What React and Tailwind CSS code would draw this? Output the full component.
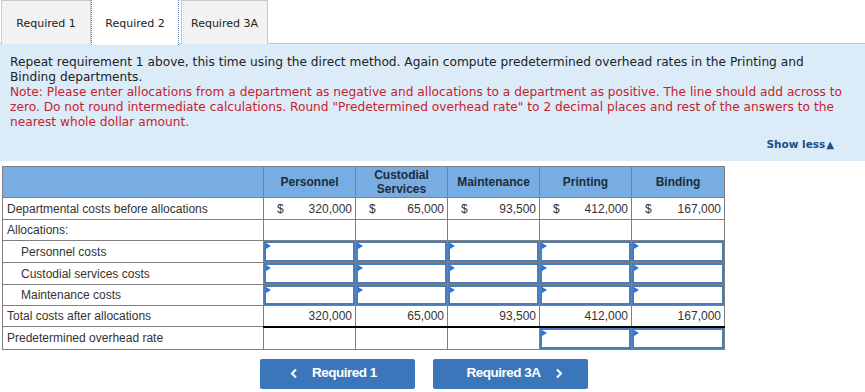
import React from "react";

const VERDANA = { fontFamily: '"DejaVu Sans", Verdana, sans-serif' };
const ARIAL = { fontFamily: '"Liberation Sans", Arial, sans-serif' };

function Marker() {
  return (
    <span className="absolute left-0 top-0 h-0 w-0 border-y-[3px] border-l-[5px] border-y-transparent border-l-[#2f73d0]" />
  );
}

function InputCell({ h = "h-[21px]" }) {
  return (
    <td className="border border-[#7f7f7f] p-0 align-top">
      <div className={`relative w-full border-2 border-[#4a7cbc] ${h}`}>
        <Marker />
      </div>
    </td>
  );
}

function PlainCell({ children, className = "" }) {
  return <td className={`border border-[#7f7f7f] px-[3px] text-right ${className}`}>{children}</td>;
}

function DollarCell({ value }) {
  return (
    <td className="border border-[#7f7f7f] pl-[13px] pr-[3px]">
      <div className="flex justify-between">
        <span>$</span>
        <span>{value}</span>
      </div>
    </td>
  );
}

const cols = ["Personnel", "Custodial Services", "Maintenance", "Printing", "Binding"];
const before = ["320,000", "65,000", "93,500", "412,000", "167,000"];

export default function App() {
  return (
    <div className="h-[392px] w-[865px] overflow-hidden bg-white">
      {/* tab strip */}
      <div className="flex h-[44px] border-b border-[#c8c8c8] pl-[1px]" style={VERDANA}>
        <div className="flex h-[44px] w-[90px] items-center justify-center border border-b-0 border-[#c8c8c8] bg-[#f2f2f2] pt-[3px] text-[11px] text-[#222]">
          Required 1
        </div>
        <div className="relative -mb-px flex h-[45px] w-[88px] items-center justify-center border-x border-dotted border-x-[#5b7fae] bg-white pt-[3px] text-[11px] text-[#222]">
          Required 2
        </div>
        <div className="ml-[2px] flex h-[44px] w-[87px] items-center justify-center border border-b-0 border-[#c8c8c8] bg-[#f2f2f2] pt-[3px] text-[11px] text-[#222]">
          Required 3A
        </div>
      </div>

      {/* instructions panel */}
      <div
        className="flex h-[117px] flex-col bg-[#dcebf8] pl-[10px] pr-[12px] pt-[11px] text-[12.2px] leading-[15px]"
        style={VERDANA}
      >
        <p className="text-[#222]">
          Repeat requirement 1 above, this time using the direct method. Again compute predetermined overhead rates in the Printing and Binding departments.
        </p>
        <p className="text-[#c5232c]">
          Note: Please enter allocations from a department as negative and allocations to a department as positive. The line should add across to zero. Do not round intermediate calculations. Round "Predetermined overhead rate" to 2 decimal places and rest of the answers to the nearest whole dollar amount.
        </p>
        <div className="mt-auto mb-[9px] flex items-center justify-end pr-[19px] text-[10.5px] font-bold text-[#1b4e8a]">
          Show less<span className="ml-[1px] text-[10px] leading-none">▲</span>
        </div>
      </div>

      {/* allocation table */}
      <div className="pl-[2px] pt-[5px]" style={ARIAL}>
        <table className="w-[722px] table-fixed border-collapse text-[12px] text-[#333]">
          <colgroup>
            <col className="w-[261px]" />
            <col className="w-[92px]" />
            <col className="w-[92px]" />
            <col className="w-[92px]" />
            <col className="w-[92px]" />
            <col className="w-[93px]" />
          </colgroup>
          <thead>
            <tr className="h-[31px] bg-[#78ade3]">
              <th className="border border-[#7f7f7f]" />
              {cols.map((c) => (
                <th
                  key={c}
                  className="border border-[#7f7f7f] px-[4px] text-center text-[12px] font-bold leading-[14px] text-[#1e2b38]"
                >
                  {c === "Custodial Services" ? (
                    <>
                      Custodial
                      <br />
                      Services
                    </>
                  ) : (
                    c
                  )}
                </th>
              ))}
            </tr>
          </thead>
          <tbody>
            <tr className="h-[22px]">
              <td className="border border-[#7f7f7f] pl-[4px]">Departmental costs before allocations</td>
              {before.map((v) => (
                <DollarCell key={v} value={v} />
              ))}
            </tr>
            <tr className="h-[21px]">
              <td className="border border-[#7f7f7f] pl-[4px]">Allocations:</td>
              {cols.map((c) => (
                <td key={c} className="border border-[#7f7f7f]" />
              ))}
            </tr>
            {["Personnel costs", "Custodial services costs", "Maintenance costs"].map((label, i) => (
              <tr key={label}>
                <td className="border border-[#7f7f7f] pl-[18px]">{label}</td>
                {cols.map((c) => (
                  <InputCell key={c} h={i === 2 ? "h-[20px]" : "h-[21px]"} />
                ))}
              </tr>
            ))}
            <tr className="h-[21px]">
              <td className="border border-[#7f7f7f] pl-[4px]">Total costs after allocations</td>
              {before.map((v) => (
                <PlainCell key={v} className="border-t-black border-b-2 border-b-black">
                  {v}
                </PlainCell>
              ))}
            </tr>
            <tr>
              <td className="border border-[#7f7f7f] pl-[4px]">Predetermined overhead rate</td>
              <td className="border border-[#7f7f7f]" />
              <td className="border border-[#7f7f7f]" />
              <td className="border border-[#7f7f7f]" />
              <InputCell />
              <InputCell />
            </tr>
          </tbody>
        </table>
      </div>

      {/* navigation buttons */}
      <div className="flex gap-[18px] pl-[260px] pt-[9px]" style={ARIAL}>
        <button className="flex h-[30px] w-[155px] items-center justify-center gap-[14px] rounded-[2px] bg-[#3a76b9] text-[13.5px] font-bold tracking-[-0.5px] text-white">
          <svg width="8" height="11" viewBox="0 0 8 11" className="-ml-[8px]">
            <path d="M6 1.5 L2 5.5 L6 9.5" fill="none" stroke="white" strokeWidth="2" />
          </svg>
          Required 1
        </button>
        <button className="flex h-[30px] w-[155px] items-center justify-center gap-[14px] rounded-[2px] bg-[#3a76b9] text-[13.5px] font-bold tracking-[-0.5px] text-white">
          Required 3A
          <svg width="8" height="11" viewBox="0 0 8 11" className="-mr-[8px]">
            <path d="M2 1.5 L6 5.5 L2 9.5" fill="none" stroke="white" strokeWidth="2" />
          </svg>
        </button>
      </div>
    </div>
  );
}
